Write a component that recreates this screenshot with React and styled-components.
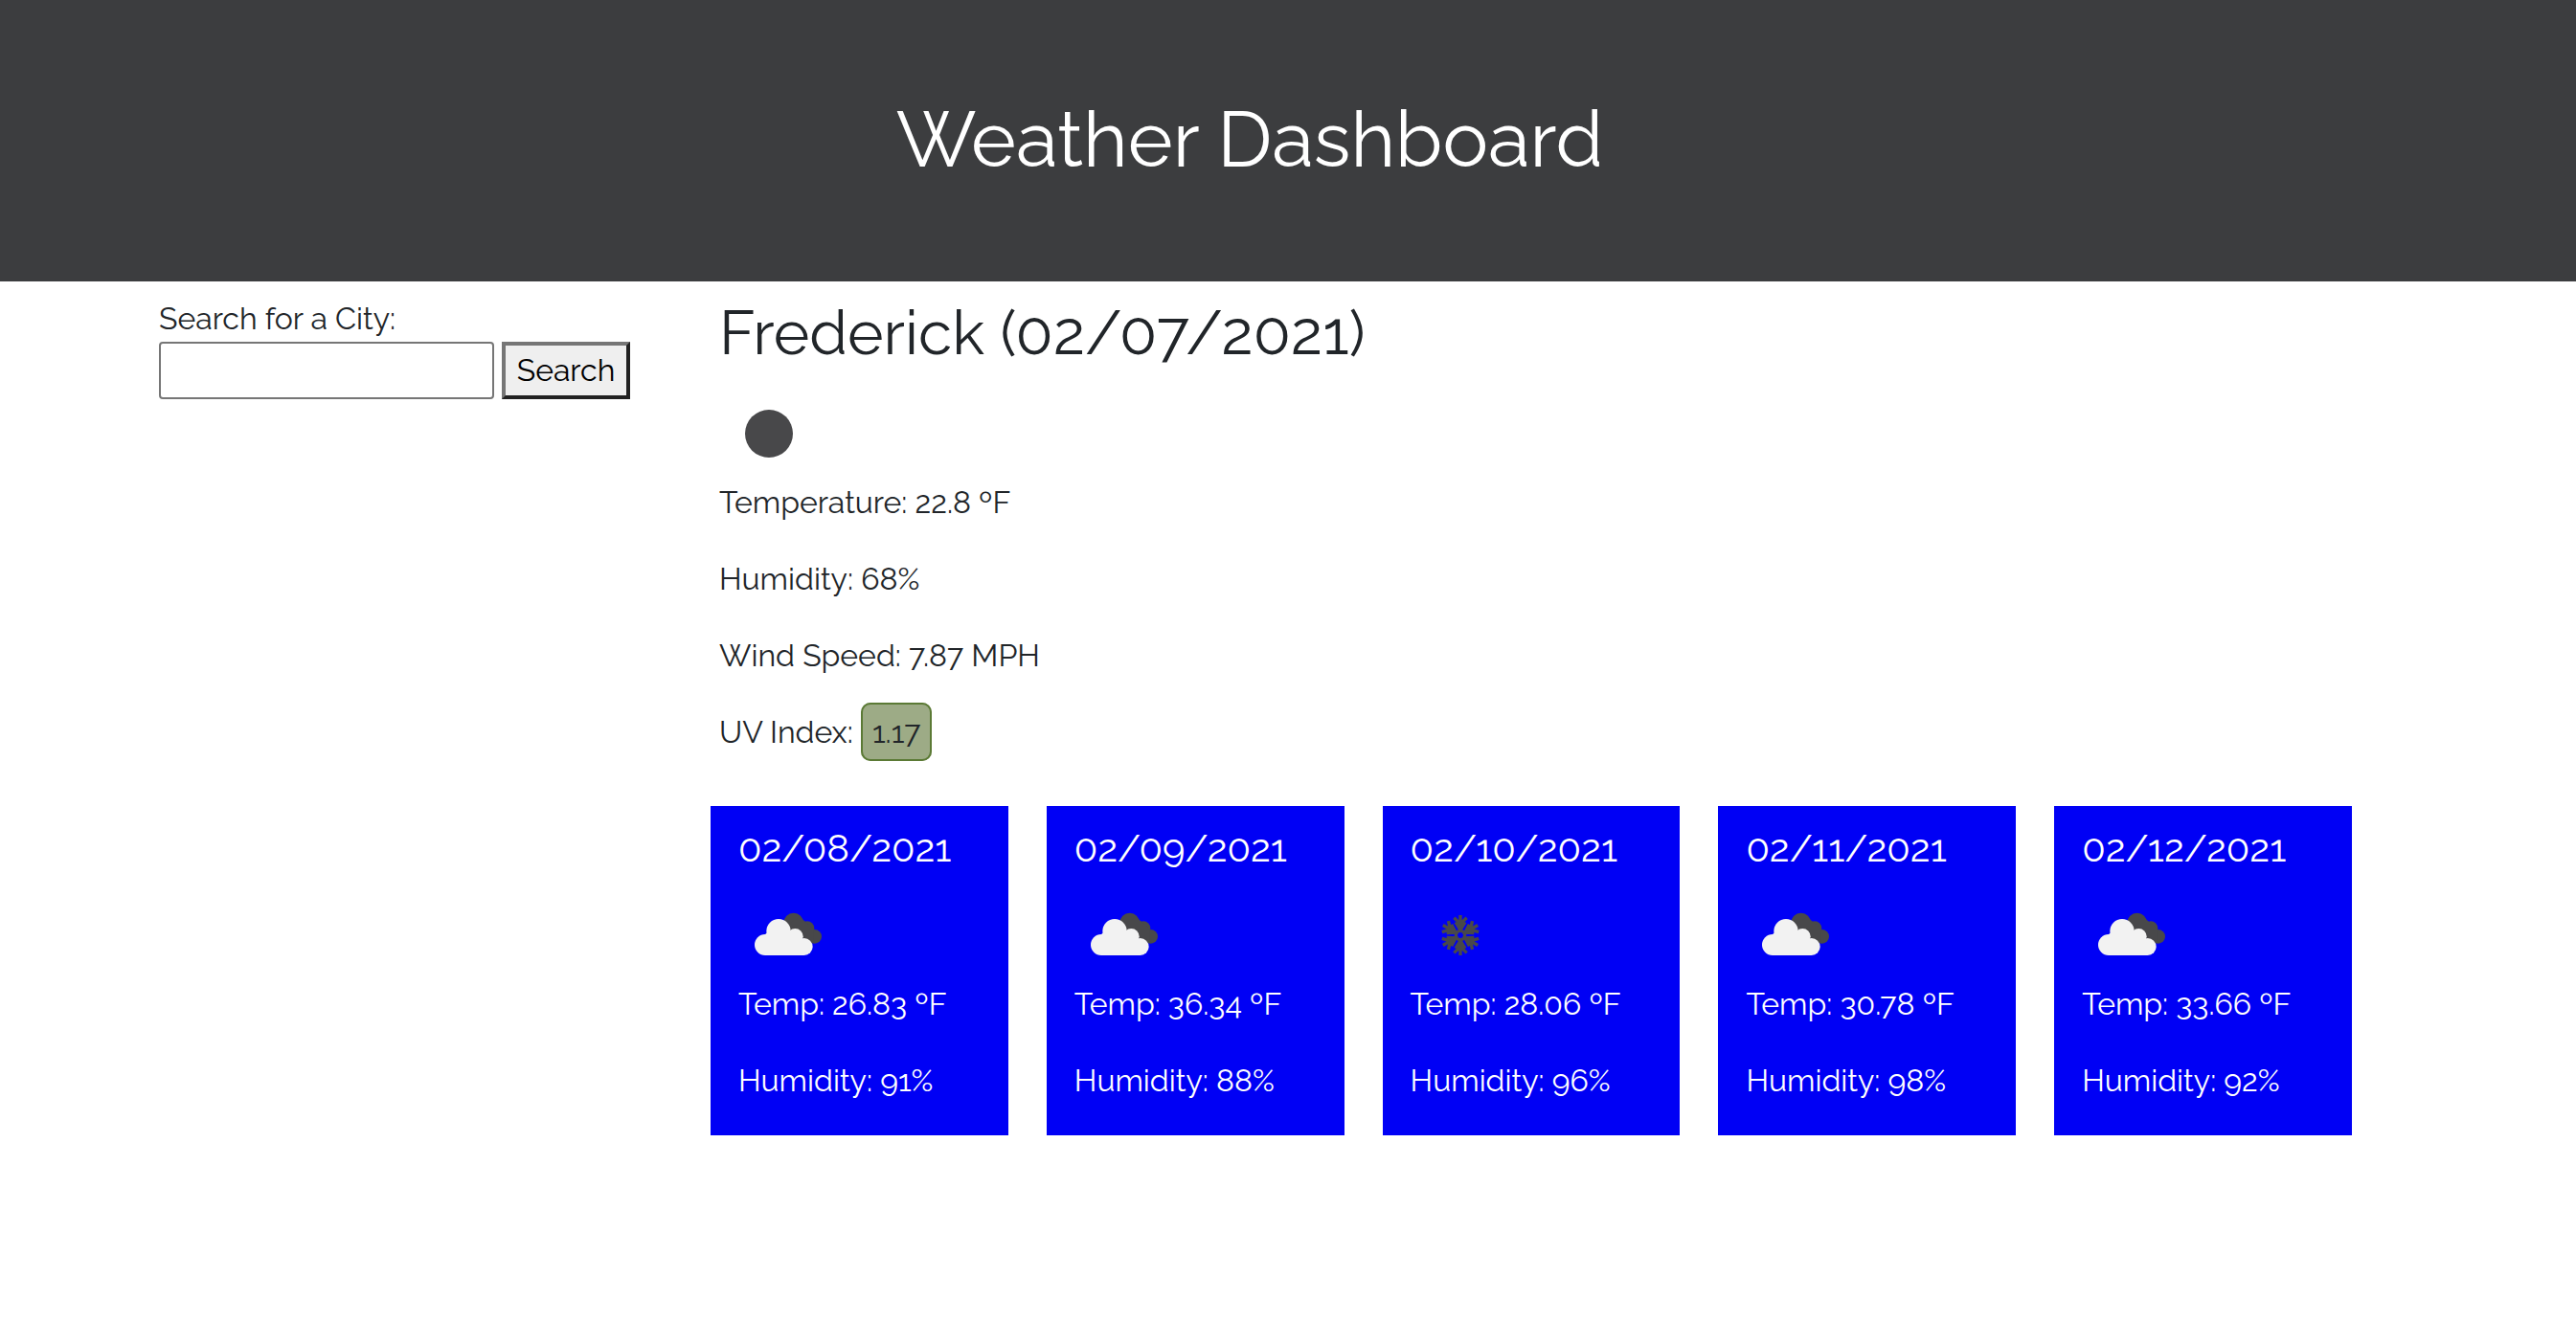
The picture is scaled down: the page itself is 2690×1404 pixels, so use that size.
import React from "react";
import styled, { createGlobalStyle } from "styled-components";

const GlobalStyle = createGlobalStyle`
  *, *::before, *::after { box-sizing: border-box; }
  body {
    margin: 0;
    background: #fff;
    color: #212529;
    font-family: Raleway, Lato, sans-serif;
    font-size: 32px;
    line-height: 48px;
    font-variant-numeric: oldstyle-nums proportional-nums;
  }
`;

const Header = styled.header`
  padding: 98px 80px 100px 0;
  background: #3c3d3f;
  color: #fff;
  text-align: center;
`;

const Title = styled.h1`
  margin: 0;
  font-size: 80px;
  line-height: 96px;
  font-weight: 400;
`;

const Page = styled.div`
  display: flex;
  padding: 15px 234px 0 166px;
`;

const SearchForm = styled.form`
  flex: 0 0 585px;
`;

const SearchLabel = styled.label`
  display: block;
`;

const SearchRow = styled.div`
  display: flex;
  gap: 8px;
`;

const CityInput = styled.input`
  width: 350px;
  height: 60px;
  padding: 2px 4px;
  border: 2px solid #767676;
  border-radius: 4px;
  background: #fff;
  font: inherit;
`;

const SearchButton = styled.button`
  width: 134px;
  height: 60px;
  padding: 0;
  border: 4px solid;
  border-color: #767676 #212121 #212121 #767676;
  background: #efefef;
  color: #000;
  font: inherit;
`;

const Main = styled.main`
  flex: 1;
  min-width: 0;
`;

const CityName = styled.h2`
  margin: 0 0 15px;
  font-size: 64px;
  line-height: 77px;
  font-weight: 400;
`;

const Icon = styled.svg`
  display: block;
  width: 100px;
  height: 100px;
`;

const Reading = styled.p`
  margin: 0 0 32px;
`;

const UvBadge = styled.span`
  padding: 10px;
  border: 2px solid #5b7a35;
  border-radius: 10px;
  background: #9dab86;
`;

const Forecast = styled.section`
  display: grid;
  grid-template-columns: repeat(5, 1fr);
  gap: 40px;
  margin: 53px 0 0 -9px;
`;

const Day = styled.article`
  padding: 20px 0 1px 29px;
  background: #0000f5;
  color: #fff;
`;

const DayDate = styled.h5`
  margin: 0 0 15px;
  font-size: 40px;
  line-height: 48px;
  font-weight: 400;
`;

function ClearNight() {
  return (
    <Icon viewBox="-3 -3 300 300" aria-hidden="true">
      <circle cx="153" cy="153" r="75" fill="#48484a" />
    </Icon>
  );
}

function BrokenClouds() {
  return (
    <Icon viewBox="-3 -3 300 300" aria-hidden="true">
      <g fill="#48484a">
        <circle cx="170" cy="114" r="31" />
        <circle cx="213" cy="131" r="22" />
        <circle cx="236" cy="157" r="22" />
        <path d="M150 120 190 96 232 132 232 179 190 160Z" />
      </g>
      <g fill="#f2f2f2">
        <circle cx="81" cy="183" r="33" />
        <circle cx="123" cy="140" r="38" />
        <circle cx="175" cy="157" r="25" />
        <circle cx="203" cy="189" r="27" />
        <path d="M81 216V150L123 120 175 150 203 175V216Z" />
      </g>
    </Icon>
  );
}

function Snow() {
  return (
    <Icon viewBox="-3 -3 300 300" aria-hidden="true">
      <g fill="none" stroke="#48484a" strokeWidth="10">
        <circle cx="153" cy="153" r="14" />
        {[0, 60, 120, 180, 240, 300].map((angle) => (
          <path
            key={angle}
            transform={`rotate(${angle} 153 153)`}
            d="M153 138V90M133 98 153 117 173 98M138 112 153 136 168 112"
          />
        ))}
      </g>
    </Icon>
  );
}

const days = [
  { date: "02/08/2021", Sky: BrokenClouds, temp: "26.83", humidity: 91 },
  { date: "02/09/2021", Sky: BrokenClouds, temp: "36.34", humidity: 88 },
  { date: "02/10/2021", Sky: Snow, temp: "28.06", humidity: 96 },
  { date: "02/11/2021", Sky: BrokenClouds, temp: "30.78", humidity: 98 },
  { date: "02/12/2021", Sky: BrokenClouds, temp: "33.66", humidity: 92 },
];

export default function App() {
  return (
    <>
      <GlobalStyle />
      <Header>
        <Title>Weather Dashboard</Title>
      </Header>
      <Page>
        <SearchForm onSubmit={(event) => event.preventDefault()}>
          <SearchLabel htmlFor="city">Search for a City:</SearchLabel>
          <SearchRow>
            <CityInput id="city" type="text" />
            <SearchButton type="submit">Search</SearchButton>
          </SearchRow>
        </SearchForm>
        <Main>
          <CityName>Frederick (02/07/2021)</CityName>
          <ClearNight />
          <Reading>Temperature: 22.8 ºF</Reading>
          <Reading>Humidity: 68%</Reading>
          <Reading>Wind Speed: 7.87 MPH</Reading>
          <Reading>
            UV Index: <UvBadge>1.17</UvBadge>
          </Reading>
          <Forecast>
            {days.map(({ date, Sky, temp, humidity }) => (
              <Day key={date}>
                <DayDate>{date}</DayDate>
                <Sky />
                <Reading>Temp: {temp} ºF</Reading>
                <Reading>Humidity: {humidity}%</Reading>
              </Day>
            ))}
          </Forecast>
        </Main>
      </Page>
    </>
  );
}
